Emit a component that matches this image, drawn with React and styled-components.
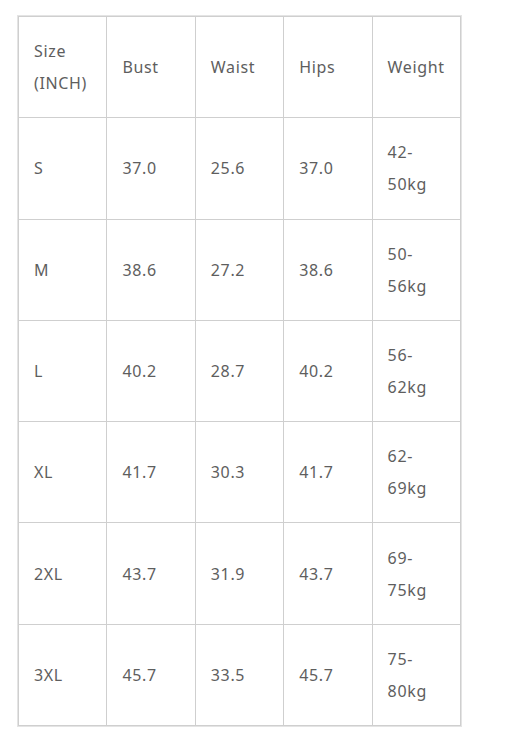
import React from "react";
import styled, { createGlobalStyle } from "styled-components";

const Global = createGlobalStyle`
  html, body { margin: 0; padding: 0; background: #fff; }
  body { font-family: "Noto Sans", "Source Sans Pro", Lato, sans-serif; }
`;

const Page = styled.div`
  padding: 15px 0 0 17px;
`;

const Frame = styled.div`
  display: inline-block;
  border: 1px solid #e4e4e4;
`;

const Grid = styled.div`
  width: 443px;
  box-sizing: border-box;
  display: grid;
  grid-template-columns: repeat(5, 1fr);
  grid-template-rows: repeat(7, 101.2857px);
  border-top: 1px solid #cfcfcf;
  border-left: 1px solid #cfcfcf;
`;

const Cell = styled.div`
  box-sizing: border-box;
  border-right: 1px solid #cfcfcf;
  border-bottom: 1px solid #cfcfcf;
  padding: 0 10px 0 15px;
  display: flex;
  align-items: center;
  font-size: 16px;
  line-height: 32px;
  letter-spacing: 0.65px;
  color: #5e5e5e;
`;

const header = ["Size (INCH)", "Bust", "Waist", "Hips", "Weight"];
const rows = [
  ["S", "37.0", "25.6", "37.0", "42-50kg"],
  ["M", "38.6", "27.2", "38.6", "50-56kg"],
  ["L", "40.2", "28.7", "40.2", "56-62kg"],
  ["XL", "41.7", "30.3", "41.7", "62-69kg"],
  ["2XL", "43.7", "31.9", "43.7", "69-75kg"],
  ["3XL", "45.7", "33.5", "45.7", "75-80kg"],
];

export default function App() {
  return (
    <Page>
      <Global />
      <Frame>
        <Grid>
          {header.map((h) => (
            <Cell key={h}>{h}</Cell>
          ))}
          {rows.map((r) =>
            r.map((c, i) => <Cell key={r[0] + i}>{c}</Cell>)
          )}
        </Grid>
      </Frame>
    </Page>
  );
}
